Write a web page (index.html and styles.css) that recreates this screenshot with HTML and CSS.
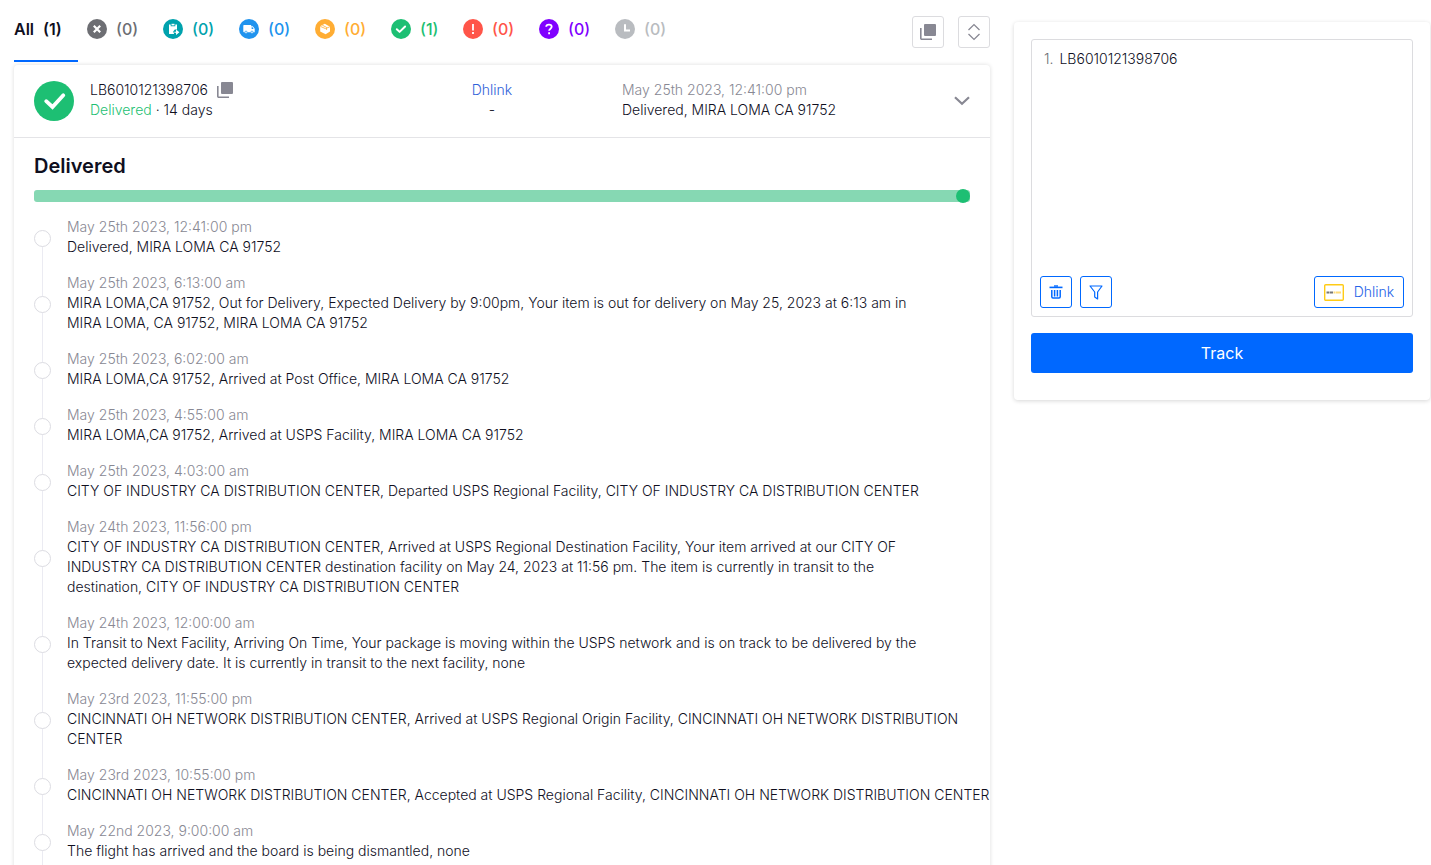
FILE: index.html
```html
<!DOCTYPE html>
<html lang="en">
<head>
<meta charset="utf-8">
<title>Package tracking</title>
<link rel="stylesheet" href="styles.css">
</head>
<body>
<div class="page">
  <main class="results">
    <div class="toolbar">
      <nav class="tabs" aria-label="Status filter">
        <button class="tab tab-all"><span>All</span><span>(1)</span></button>
        <button class="tab grey"><svg class="dot" viewBox="0 0 20 20"><circle cx="10" cy="10" r="10" fill="currentColor"/><path d="M6.8 6.8l6.4 6.4M13.2 6.8l-6.4 6.4" stroke="#fff" stroke-width="2.2"/></svg>(0)</button>
        <button class="tab teal"><svg class="dot" viewBox="0 0 20 20"><circle cx="10" cy="10" r="10" fill="currentColor"/><path d="M6 5.600h1.700v1.700h4.600V5.600H14v5h-2.200l-1.600 2 .9 2.400H6z" fill="#fff"/><path d="M8.500 4.800h3v1.600h-3z" fill="#fff"/><path d="M11.400 13.300h2.200M13.600 11.700v3.200l1.900-1.600z" stroke="#fff" stroke-width="1.100" fill="#fff"/></svg>(0)</button>
        <button class="tab blue"><svg class="dot" viewBox="0 0 20 20"><circle cx="10" cy="10" r="10" fill="currentColor"/><path d="M5 6h7.200v1.200h1.600l1.900 2.600v3.400H5a.7.7 0 0 1-.7-.7V6.700A.7.7 0 0 1 5 6z" fill="#fff"/><path d="M12.600 8.200h1l1 1.700h-2z" fill="currentColor"/><circle cx="7" cy="13.300" r="1.200" fill="#fff" stroke="currentColor" stroke-width=".7"/><circle cx="13" cy="13.300" r="1.200" fill="#fff" stroke="currentColor" stroke-width=".7"/></svg>(0)</button>
        <button class="tab orange"><svg class="dot" viewBox="0 0 20 20"><circle cx="10" cy="10" r="10" fill="currentColor"/><path d="M9.800 4.800l5.200 3v4.800L10.600 15.200 5.200 12.600V7.200L7.300 6z" fill="#fff"/><path d="M7.200 6.100l4.400 2.300v2.600M5.400 7.400l5 2.200 4.400-1.800" fill="none" stroke="currentColor" stroke-width=".8"/></svg>(0)</button>
        <button class="tab green delivered"><svg class="dot" viewBox="0 0 20 20"><circle cx="10" cy="10" r="10" fill="currentColor"/><path d="M5.800 10.200l2.800 2.700 5.500-5.400" fill="none" stroke="#fff" stroke-width="2" stroke-linecap="round" stroke-linejoin="round"/></svg>(1)</button>
        <button class="tab red"><svg class="dot" viewBox="0 0 20 20"><circle cx="10" cy="10" r="10" fill="currentColor"/><path d="M10 5v6.500M10 13v2" stroke="#fff" stroke-width="1.800"/></svg>(0)</button>
        <button class="tab purple"><svg class="dot" viewBox="0 0 20 20"><circle cx="10" cy="10" r="10" fill="currentColor"/><path d="M7.200 7.700C7.300 4.800 12.700 4.900 12.700 7.800c0 1.800-2.600 2-2.600 4M10.100 13.200v2" fill="none" stroke="#fff" stroke-width="1.800"/></svg>(0)</button>
        <button class="tab silver"><svg class="dot" viewBox="0 0 20 20"><circle cx="10" cy="10" r="10" fill="currentColor"/><path d="M10 5.300v6.200h5" fill="none" stroke="#fff" stroke-width="2"/></svg>(0)</button>
      </nav>
      <div class="tools">
        <button class="tool" aria-label="Copy all"><svg width="16" height="16" viewBox="0 0 16 16"><rect x="4" width="12" height="12" rx="1" fill="#888893"/><path d="M.8 4v10.200a1 1 0 0 0 1 1H12" fill="none" stroke="#888893" stroke-width="1.600"/></svg></button>
        <button class="tool" aria-label="Expand or collapse"><svg width="12" height="18" viewBox="0 0 12 18"><path d="M.5 7L6 1.600 11.500 7M.5 11L6 16.400 11.500 11" fill="none" stroke="#888893" stroke-width="1.300"/></svg></button>
      </div>
    </div>

    <article class="card">
      <header class="summary">
        <svg class="status" viewBox="0 0 40 40"><circle cx="20" cy="20" r="20" fill="#1dbf73"/><path d="M12.200 20.200l6.300 5.800 10.800-11.700" fill="none" stroke="#fff" stroke-width="3.800" stroke-linecap="round" stroke-linejoin="miter"/></svg>
        <div class="parcel">
          <div class="number">LB6010121398706 <button class="plain" aria-label="Copy number"><svg width="16" height="16" viewBox="0 0 16 16"><rect x="4" width="12" height="12" rx="1" fill="#888893"/><path d="M.8 4v10.200a1 1 0 0 0 1 1H12" fill="none" stroke="#888893" stroke-width="1.600"/></svg></button></div>
          <div><span class="green">Delivered</span> · 14 days</div>
        </div>
        <div class="carrier"><a href="#">Dhlink</a><div>-</div></div>
        <div class="latest"><time>May 25th 2023, 12:41:00 pm</time><div>Delivered, MIRA LOMA CA 91752</div></div>
        <button class="plain chevron" aria-label="Collapse"><svg width="16" height="10" viewBox="0 0 16 10"><path d="M1 1.200l7 6.600 7-6.600" fill="none" stroke="#888893" stroke-width="2.200"/></svg></button>
      </header>
      <section class="details">
        <h2>Delivered</h2>
        <div class="progress"><span class="knob"></span></div>
        <ol class="timeline">
          <li><div><time>May 25th 2023, 12:41:00 pm</time><p>Delivered, MIRA LOMA CA 91752</p></div></li>
          <li><div><time>May 25th 2023, 6:13:00 am</time><p>MIRA LOMA,CA 91752, Out for Delivery, Expected Delivery by 9:00pm, Your item is out for delivery on May 25, 2023 at 6:13 am in<br>MIRA LOMA, CA 91752, MIRA LOMA CA 91752</p></div></li>
          <li><div><time>May 25th 2023, 6:02:00 am</time><p>MIRA LOMA,CA 91752, Arrived at Post Office, MIRA LOMA CA 91752</p></div></li>
          <li><div><time>May 25th 2023, 4:55:00 am</time><p>MIRA LOMA,CA 91752, Arrived at USPS Facility, MIRA LOMA CA 91752</p></div></li>
          <li><div><time>May 25th 2023, 4:03:00 am</time><p>CITY OF INDUSTRY CA DISTRIBUTION CENTER, Departed USPS Regional Facility, CITY OF INDUSTRY CA DISTRIBUTION CENTER</p></div></li>
          <li><div><time>May 24th 2023, 11:56:00 pm</time><p>CITY OF INDUSTRY CA DISTRIBUTION CENTER, Arrived at USPS Regional Destination Facility, Your item arrived at our CITY OF<br>INDUSTRY CA DISTRIBUTION CENTER destination facility on May 24, 2023 at 11:56 pm. The item is currently in transit to the<br>destination, CITY OF INDUSTRY CA DISTRIBUTION CENTER</p></div></li>
          <li><div><time>May 24th 2023, 12:00:00 am</time><p>In Transit to Next Facility, Arriving On Time, Your package is moving within the USPS network and is on track to be delivered by the<br>expected delivery date. It is currently in transit to the next facility, none</p></div></li>
          <li><div><time>May 23rd 2023, 11:55:00 pm</time><p>CINCINNATI OH NETWORK DISTRIBUTION CENTER, Arrived at USPS Regional Origin Facility, CINCINNATI OH NETWORK DISTRIBUTION<br>CENTER</p></div></li>
          <li><div><time>May 23rd 2023, 10:55:00 pm</time><p>CINCINNATI OH NETWORK DISTRIBUTION CENTER, Accepted at USPS Regional Facility, CINCINNATI OH NETWORK DISTRIBUTION CENTER</p></div></li>
          <li><div><time>May 22nd 2023, 9:00:00 am</time><p>The flight has arrived and the board is being dismantled, none</p></div></li>
        </ol>
      </section>
    </article>
  </main>

  <aside class="side">
    <form class="box">
      <div class="entry">
        <label class="line-number" for="numbers">1.</label>
        <textarea id="numbers" spellcheck="false">LB6010121398706</textarea>
      </div>
      <div class="actions">
        <button type="button" class="action square" aria-label="Clear"><svg width="14" height="14" viewBox="0 0 14 14"><path d="M.5 2.400h13" stroke="#0068ff" stroke-width="1.600" fill="none"/><path d="M5 1h4" stroke="#0068ff" stroke-width="1.400"/><path d="M2.800 5v6.800a1.200 1.200 0 0 0 1.200 1.200h6a1.200 1.200 0 0 0 1.200-1.200V5M5.600 5v6.500M8.400 5v6.500" stroke="#0068ff" stroke-width="1.500" fill="none"/></svg></button>
        <button type="button" class="action square" aria-label="Filter"><svg width="14" height="15" viewBox="0 0 14 15"><path d="M1 1h12L8.600 7v7L5.700 12V7z" stroke="#0068ff" stroke-width="1.200" fill="none" stroke-linejoin="round"/></svg></button>
        <button type="button" class="action courier"><svg width="20" height="17" viewBox="0 0 20 17"><rect x=".7" y=".7" width="18.600" height="15.600" rx="1" fill="#fff" stroke="#ffcb16" stroke-width="1.400"/><path d="M2.500 7.500h3v2h-3zM6 7.500h3v2H6z" fill="#777"/><path d="M9.500 7.500h2v2h-2zM12 7.500h5v2h-5z" fill="#ffdc7a"/></svg>Dhlink</button>
      </div>
    </form>
    <button class="track">Track</button>
  </aside>
</div>
</body>
</html>
```

FILE: styles.css
```css
*, *::before, *::after { box-sizing: border-box; }
body {
  margin: 0;
  height: 100vh;
  overflow: hidden;
  background: #fff;
  color: #0f0f1e;
  font: 300 14px/20px Inter, "Open Sans", sans-serif;
}
button { font: inherit; color: inherit; background: none; border: 0; padding: 0; cursor: pointer; }
svg { display: block; flex: none; }
a { color: #2f62d9; text-decoration: none; }
time { display: block; color: #888893; }
p { margin: 0; }

.page { display: grid; grid-template-columns: minmax(0, 1fr) 416px; gap: 24px; padding: 0 1px 0 14px; }

.toolbar { display: flex; justify-content: space-between; height: 65px; }
.tabs { display: flex; gap: 24px; height: 62px; }
.tab { display: flex; align-items: center; gap: 9px; min-width: 52px; height: 57px; font-size: 16px; font-weight: 500; white-space: nowrap; }
.tab-all { position: relative; min-width: 49px; font-weight: 600; }
.tab-all::after { content: ""; position: absolute; left: 0; top: 60px; width: 64px; height: 2px; background: #0068ff; }
.delivered { min-width: 48px; }
.dot { width: 20px; height: 20px; }
.grey { color: #6d6e73; }
.teal { color: #00a2ad; }
.blue { color: #2093ee; }
.orange { color: #ffad33; }
.green { color: #1dbf73; }
.red { color: #ff5549; }
.purple { color: #8000ff; }
.silver { color: #b9bcc0; }
.tools { display: flex; gap: 14px; padding-top: 16px; }
.tool { display: flex; align-items: center; justify-content: center; width: 32px; height: 32px; border: 1px solid #dcdcdf; border-radius: 3px; }

.card { border-radius: 4px; box-shadow: 0 0 4px rgba(0, 0, 0, .14); }
.summary { display: grid; grid-template-columns: 40px 312px 148px 1fr 16px; column-gap: 16px; align-items: center; height: 73px; padding: 0 20px; border-bottom: 1px solid #e4e4e7; }
.status { width: 40px; height: 40px; }
.parcel, .carrier, .latest { padding-bottom: 2px; }
.number { display: flex; align-items: center; gap: 9px; }
.carrier { text-align: center; }
.latest { padding-left: 40px; }

.details { padding: 16px 20px; }
h2 { margin: 0 0 12px; font-size: 20px; line-height: 24px; font-weight: 600; }
.progress { position: relative; height: 12px; margin-bottom: 15px; border-radius: 3px; background: #86d8b3; }
.knob { position: absolute; right: 0; top: -1px; width: 14px; height: 14px; border-radius: 50%; background: #1dbf73; }
.timeline { margin: 0; padding: 0; list-style: none; }
.timeline li { position: relative; display: flex; align-items: center; gap: 16px; margin-bottom: 16px; white-space: nowrap; }
.timeline li::before { content: ""; flex: none; width: 17px; height: 17px; margin-top: 2px; border: 1px solid #dcdce2; border-radius: 50%; background: #fff; z-index: 1; }
.timeline li::after { content: ""; position: absolute; left: 8px; top: 0; bottom: -16px; width: 1px; background: #ebebf2; }
.timeline li:first-child::after { top: 50%; }

.side { align-self: start; margin-top: 22px; padding: 17px 17px 27px; border-radius: 4px; box-shadow: 0 1px 4px rgba(0, 0, 0, .16); }
.box { border: 1px solid #dcdcdf; border-radius: 3px; padding: 9px 8px 8px; }
.entry { display: flex; gap: 6px; padding-left: 4px; }
.line-number { color: #6d6e73; }
textarea { flex: 1; height: 227px; padding: 0; border: 0; outline: 0; resize: none; font: inherit; color: inherit; background: none; }
.actions { display: flex; gap: 8px; }
.action { display: flex; align-items: center; justify-content: center; height: 32px; border: 1px solid #0068ff; border-radius: 3px; color: #2463e8; }
.square { width: 32px; }
.courier { gap: 10px; width: 90px; margin-left: auto; }
.track { display: block; width: 100%; height: 40px; margin-top: 16px; border-radius: 3px; background: #0068ff; color: #fff; font-size: 16px; font-weight: 400; }
```
